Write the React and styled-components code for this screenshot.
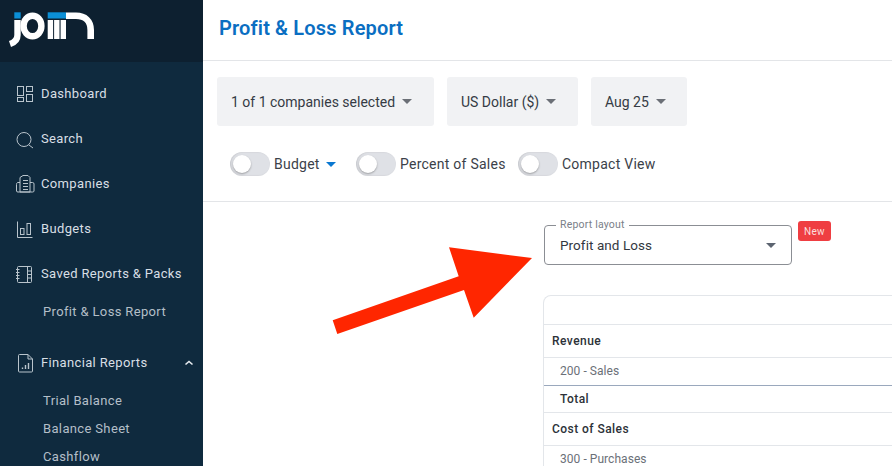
import React from "react";
import styled, { createGlobalStyle } from "styled-components";

const GlobalStyle = createGlobalStyle`
  html, body { margin: 0; padding: 0; height: 100%; background: #fff; }
  body { font-family: "Roboto", "Noto Sans", sans-serif; overflow: hidden; }
  #root { height: 100%; }
`;

const Page = styled.div`
  display: flex;
  width: 892px;
  height: 466px;
  overflow: hidden;
  position: relative;
`;

const Sidebar = styled.aside`
  width: 203px;
  flex: none;
  background: #0f2a3e;
  overflow: hidden;
`;

const LogoBar = styled.div`
  height: 62px;
  background: #0d2030;
`;

const Nav = styled.nav`
  padding-top: 9px;
`;

const NavItem = styled.div`
  height: 45px;
  display: flex;
  align-items: center;
  gap: 6px;
  padding-left: 15px;
  color: #d8dfe5;
  font-size: 13px;
  letter-spacing: 0.35px;
  margin-top: ${(p) => p.$gap || 0}px;
  svg { flex: none; }
`;

const Chevron = styled.svg`
  margin-left: auto;
  margin-right: 9px;
`;

const SubItem = styled.div`
  height: 28px;
  display: flex;
  align-items: center;
  padding-left: 43px;
  color: #b4bfc8;
  font-size: 13px;
  letter-spacing: 0.35px;
  margin-top: ${(p) => p.$top || 0}px;
`;

const Main = styled.main`
  flex: 1;
  min-width: 0;
`;

const Header = styled.header`
  height: 56px;
  border-bottom: 1px solid #e3e5e8;
  display: flex;
  align-items: center;
  padding: 0 0 4px 16px;
`;

const Title = styled.h1`
  margin: 0;
  font-size: 20px;
  font-weight: 600;
  letter-spacing: 0.15px;
  color: #0a6ec2;
`;

const Filters = styled.div`
  display: flex;
  gap: 13px;
  padding: 16px 0 0 14px;
`;

const FilterButton = styled.div`
  width: ${(p) => p.$width}px;
  height: 49px;
  box-sizing: border-box;
  padding-left: 14px;
  background: #f1f2f4;
  border-radius: 3px;
  display: flex;
  align-items: center;
  gap: 7px;
  color: #353b44;
  font-size: 14px;
`;

const Caret = styled.span`
  width: 0;
  height: 0;
  border-left: 5px solid transparent;
  border-right: 5px solid transparent;
  border-top: 5px solid ${(p) => p.$color || "#6b6f76"};
  margin-left: ${(p) => p.$left || 0}px;
`;

const Toggles = styled.div`
  height: 49px;
  padding: 26px 0 0 27px;
  display: flex;
  align-items: flex-start;
  border-bottom: 1px solid #e3e5e8;
`;

const ToggleGroup = styled.div`
  display: flex;
  align-items: center;
  height: 24px;
  width: ${(p) => p.$width}px;
  flex: none;
  gap: 4px;
  color: #3b4149;
  font-size: 14px;
  letter-spacing: 0.25px;
`;

const Track = styled.span`
  width: 40px;
  height: 24px;
  flex: none;
  border-radius: 12px;
  background: #dfe1e6;
  box-shadow: inset 1px 0 2px rgba(0, 0, 0, 0.12);
  display: flex;
  align-items: center;
  padding-left: 3px;
  box-sizing: border-box;
`;

const Knob = styled.span`
  width: 18px;
  height: 18px;
  border-radius: 50%;
  background: #fff;
  box-shadow: 0 1px 2px rgba(0, 0, 0, 0.3);
`;

const Report = styled.section`
  padding: 22px 0 0 340px;
`;

const SelectRow = styled.div`
  display: flex;
  align-items: flex-start;
  gap: 6px;
  padding-left: 1px;
`;

const Select = styled.div`
  position: relative;
  width: 248px;
  height: 40px;
  box-sizing: border-box;
  margin-top: 1px;
  border: 1px solid #8b8e94;
  border-radius: 4px;
  display: flex;
  align-items: center;
  justify-content: space-between;
  padding: 0 15px;
  color: #33383f;
  font-size: 13.5px;
  letter-spacing: 0.07px;
`;

const SelectLabel = styled.span`
  position: absolute;
  top: -7px;
  left: 11px;
  padding: 0 4px;
  background: #fff;
  color: #7a8088;
  font-size: 10.5px;
  line-height: 12px;
  letter-spacing: 0.2px;
`;

const Badge = styled.span`
  width: 33px;
  height: 20px;
  margin-top: -3px;
  border-radius: 3px;
  background: #ef3e42;
  color: #fbdede;
  font-size: 10px;
  letter-spacing: 0.3px;
  display: flex;
  align-items: center;
  justify-content: center;
`;

const Table = styled.div`
  margin-top: 30px;
  width: 500px;
  border: 1px solid #e3e6ea;
  border-top-left-radius: 8px;
  border-bottom: none;
`;

const Row = styled.div`
  height: ${(p) => p.$height}px;
  border-bottom: 1px solid ${(p) => p.$line || "#e3e6ea"};
  display: flex;
  align-items: center;
  padding-left: ${(p) => p.$indent || 8}px;
  font-size: 12px;
  color: ${(p) => (p.$bold ? "#2c3138" : "#6b7078")};
  font-weight: ${(p) => (p.$bold ? 500 : 400)};
  letter-spacing: ${(p) => (p.$bold ? 0.45 : 0.05)}px;
  padding-bottom: ${(p) => (p.$bold ? 0 : 2)}px;
`;

const Arrow = styled.svg`
  position: absolute;
  left: 320px;
  top: 235px;
`;

const NavIcon = ({ children }) => (
  <svg width="20" height="20" viewBox="0 0 20 20" fill="none" stroke="#b9c4cc" strokeWidth="1">
    {children}
  </svg>
);

const Logo = () => (
  <svg width="110" height="62" viewBox="0 0 110 62">
    <rect x="14.3" y="12.3" width="6.4" height="6.2" fill="#0b8fd6" />
    <rect x="47.7" y="12.3" width="18.3" height="6.2" fill="#0b8fd6" />
    <path d="M17.5 20V35Q17.5 41.5 10 44" fill="none" stroke="#fff" strokeWidth="6.4" />
    <ellipse cx="32.5" cy="26" rx="8.9" ry="10.3" fill="none" stroke="#fff" strokeWidth="6.4" />
    <rect x="47.7" y="20" width="5.4" height="19" fill="#fff" />
    <rect x="54.1" y="20" width="5.4" height="19" fill="#fff" />
    <rect x="60.6" y="20" width="5.4" height="19" fill="#fff" />
    <path d="M66 15.8H76C85 15.8 90.7 21 90.7 30V39" fill="none" stroke="#fff" strokeWidth="6.6" />
  </svg>
);

const icons = {
  dashboard: (
    <>
      <rect x="2.5" y="2.5" width="6" height="9" />
      <rect x="11.5" y="2.5" width="6" height="5" />
      <rect x="2.5" y="13.5" width="6" height="4" />
      <rect x="11.5" y="10.5" width="6" height="7" />
    </>
  ),
  search: (
    <>
      <circle cx="9" cy="10.5" r="7" />
      <path d="M14 16l4 3" />
    </>
  ),
  companies: (
    <>
      <path d="M5 18V3.5L8 1.5h5l2 2V18z" />
      <path d="M5 8.5H2.5Q1.5 9 1.5 10.5V17Q1.5 18 3 18H17.5Q19 18 19 17V10Q19 8.5 17.5 8.5H15" />
      <path d="M8 6.5h5M8 9.5h5M8 12.5h5M8 15.5h5" />
    </>
  ),
  budgets: (
    <>
      <path d="M2.5 2.5V18.5H17.5" />
      <rect x="5.5" y="9.5" width="3.5" height="6" />
      <rect x="12" y="4.5" width="3.5" height="11" />
    </>
  ),
  saved: (
    <>
      <rect x="2.5" y="2.5" width="14" height="16" rx="1" />
      <path d="M12.5 2.5V18.5M12.5 7h4M12.5 10.5h4M12.5 14h4" />
      <path d="M1 5.5h3.5M1 8.5h3.5M1 11.5h3.5M1 14.5h3.5" />
    </>
  ),
  financial: (
    <>
      <path d="M4.5 1.5H13L17.5 6V18Q17.5 19 16.5 19H4.5Q3.5 19 3.5 18V2.5Q3.5 1.5 4.5 1.5z" />
      <path d="M13 1.5V6H17.5" />
      <path d="M7.5 16v-1.5M10.5 16v-4M13.5 16v-6" strokeWidth="1.4" />
    </>
  )
};

const mainNav = [
  ["dashboard", "Dashboard"],
  ["search", "Search"],
  ["companies", "Companies"],
  ["budgets", "Budgets"],
  ["saved", "Saved Reports & Packs"]
];

const financialItems = ["Trial Balance", "Balance Sheet", "Cashflow"];

export default function App() {
  return (
    <Page>
      <GlobalStyle />
      <Sidebar>
        <LogoBar>
          <Logo />
        </LogoBar>
        <Nav>
          {mainNav.map(([icon, label]) => (
            <NavItem key={label}>
              <NavIcon>{icons[icon]}</NavIcon>
              {label}
            </NavItem>
          ))}
          <SubItem $top={1}>Profit &amp; Loss Report</SubItem>
          <NavItem $gap={15}>
            <NavIcon>{icons.financial}</NavIcon>
            Financial Reports
            <Chevron width="10" height="8" viewBox="0 0 10 8" fill="none" stroke="#e6ebef" strokeWidth="1.6">
              <path d="M1.5 5.5L5 2.5l3.5 3" />
            </Chevron>
          </NavItem>
          {financialItems.map((item, i) => (
            <SubItem key={item} $top={i === 0 ? 1 : 0}>{item}</SubItem>
          ))}
        </Nav>
      </Sidebar>

      <Main>
        <Header>
          <Title>Profit &amp; Loss Report</Title>
        </Header>
        <Filters>
          <FilterButton $width={217}>1 of 1 companies selected <Caret /></FilterButton>
          <FilterButton $width={131}>US Dollar ($) <Caret /></FilterButton>
          <FilterButton $width={96}>Aug 25 <Caret /></FilterButton>
        </Filters>
        <Toggles>
          <ToggleGroup $width={126}>
            <Track><Knob /></Track>
            Budget
            <Caret $color="#0a78d1" $left={2} />
          </ToggleGroup>
          <ToggleGroup $width={162}>
            <Track><Knob /></Track>
            Percent of Sales
          </ToggleGroup>
          <ToggleGroup $width={150}>
            <Track><Knob /></Track>
            Compact View
          </ToggleGroup>
        </Toggles>
        <Report>
          <SelectRow>
            <Select>
              <SelectLabel>Report layout</SelectLabel>
              Profit and Loss
              <Caret $color="#5c6470" />
            </Select>
            <Badge>New</Badge>
          </SelectRow>
          <Table>
            <Row $height={28} $bold />
            <Row $height={32} $bold>Revenue</Row>
            <Row $height={25} $indent={16} $line="#9aa8bd">200 - Sales</Row>
            <Row $height={26} $indent={16} $bold>Total</Row>
            <Row $height={32} $bold>Cost of Sales</Row>
            <Row $height={25} $indent={16}>300 - Purchases</Row>
          </Table>
        </Report>
      </Main>

      <Arrow width="220" height="110" viewBox="320 235 220 110">
        <polygon
          points="332.7,320.3 337.3,334 464,290 473.7,317.7 532,258 449,247.3 458.7,276.3"
          fill="#ff2600"
        />
      </Arrow>
    </Page>
  );
}
